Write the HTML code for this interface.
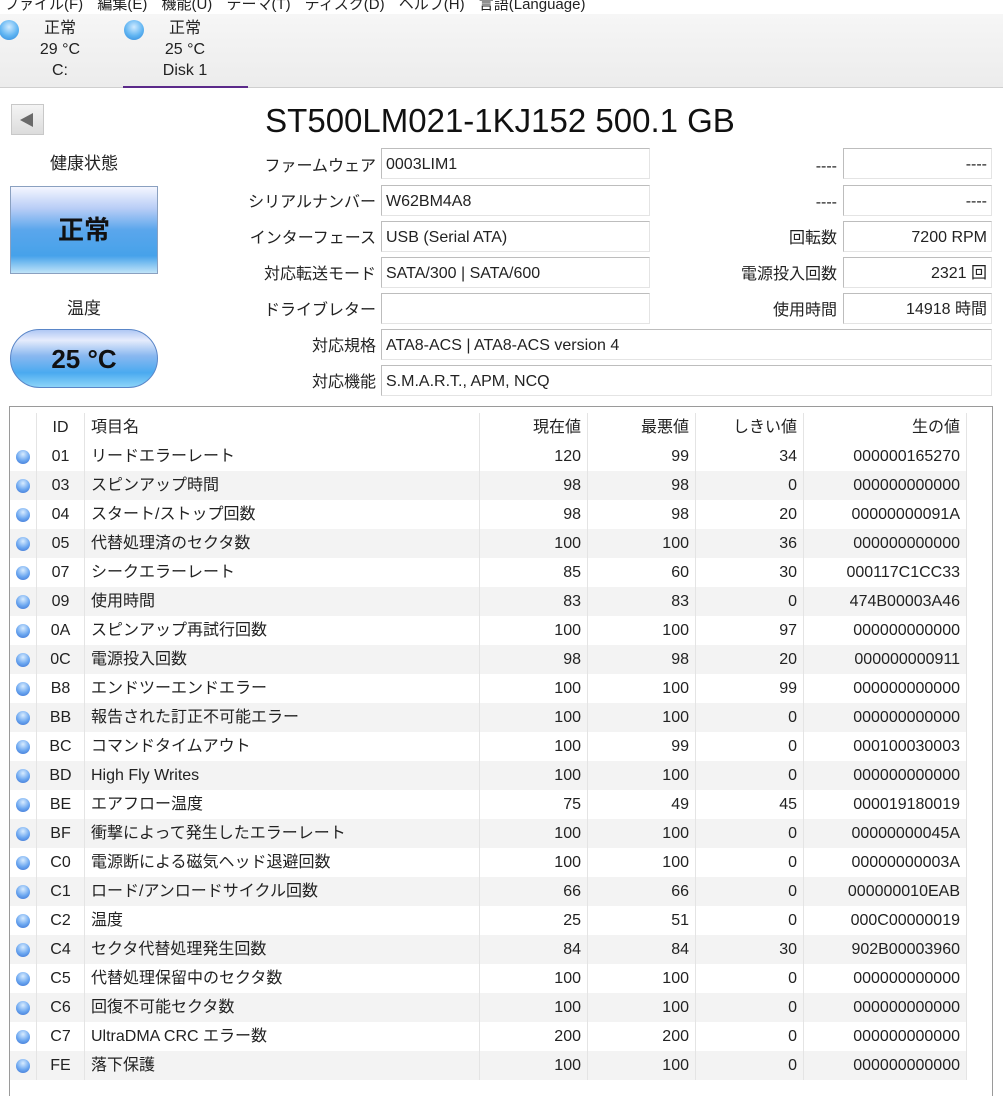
<!DOCTYPE html>
<html><head><meta charset="utf-8"><style>
*{margin:0;padding:0;box-sizing:border-box}
body{width:1003px;height:1087px;background:#fff;font-family:"Liberation Sans","Noto Sans CJK JP",sans-serif;color:#111;position:relative;overflow:hidden;font-size:16px}
.a{position:absolute;white-space:nowrap}
.menu{top:-7px;left:4px;font-size:15px;color:#222;word-spacing:10px}
.tabs{left:0;top:14px;width:1003px;height:74px;background:linear-gradient(#f6f6f6,#ececec);border-bottom:1px solid #cfcfcf}
.dot{width:20px;height:20px;border-radius:50%;background:radial-gradient(circle at 50% 35%,#cfeaff,#5fb4f2 55%,#2f86d8);}
.tab{text-align:center;font-size:16px;line-height:21px;color:#222}
.lbl{text-align:right;font-size:16px;color:#222;height:24px;line-height:24px}
.box{border:1px solid #bdbdbd;border-right-color:#e4e4e4;border-bottom-color:#e4e4e4;height:31px;font-size:16px;line-height:31px;padding:0 4px;color:#222;background:#fff}
.r{text-align:right}
table{border-collapse:collapse;font-size:16px;color:#222}
td{height:29px;line-height:29px;padding:0 6px;border-right:1px solid #e4e4e4;white-space:nowrap;vertical-align:middle}
tr:nth-child(odd) td{background:#f3f3f3}
tr.h td{background:#fff}
.sd{display:inline-block;width:14px;height:14px;border-radius:50%;background:radial-gradient(circle at 50% 30%,#d8ecff,#6aa6f0 55%,#3a6fd0);vertical-align:middle}
</style></head><body>
<div class="a menu">ファイル(F) 編集(E) 機能(U) テーマ(T) ディスク(D) ヘルプ(H) 言語(Language)</div>
<div class="a tabs"></div>
<div class="a dot" style="left:-1px;top:20px"></div>
<div class="a tab" style="left:30px;top:18px;width:60px">正常<br>29 °C<br>C:</div>
<div class="a dot" style="left:124px;top:20px"></div>
<div class="a tab" style="left:150px;top:18px;width:70px">正常<br>25 °C<br>Disk 1</div>
<div class="a" style="left:123px;top:86px;width:125px;height:2px;background:#5b2a8a"></div>
<div class="a" style="left:11px;top:104px;width:33px;height:31px;border:1px solid #c8c8c8;background:linear-gradient(#f4f4f4,#dcdcdc)"><div style="position:absolute;left:8px;top:8px;width:0;height:0;border-top:7px solid transparent;border-bottom:7px solid transparent;border-right:13px solid #6a6a6a"></div></div>
<div class="a" style="left:200px;width:600px;top:101px;text-align:center;font-size:33px;line-height:40px;color:#111">ST500LM021-1KJ152 500.1 GB</div>

<div class="a" style="left:10px;width:148px;top:152px;text-align:center;font-size:17px;line-height:24px;color:#222">健康状態</div>
<div class="a" style="left:10px;top:186px;width:148px;height:88px;border:1px solid #8aa0c0;background:linear-gradient(#f4f6ff 0%,#b8cdf6 25%,#5aa6ec 50%,#46a2ea 80%,#c0e4f8 100%);text-align:center;line-height:86px;font-size:26px;font-weight:bold;color:#111">正常</div>
<div class="a" style="left:10px;width:148px;top:297px;text-align:center;font-size:17px;line-height:24px;color:#222">温度</div>
<div class="a" style="left:10px;top:329px;width:148px;height:59px;border-radius:30px;border:1px solid #5a86c8;background:linear-gradient(#b0c8f4 0%,#e6ecfc 18%,#8ab8f0 45%,#4aaaf0 75%,#8cd4f8 100%);text-align:center;line-height:58px;font-size:26px;font-weight:bold;color:#111">25 °C</div>

<div class="a lbl" style="right:627px;top:155px">ファームウェア</div>
<div class="a box" style="left:381px;top:148px;width:269px">0003LIM1</div>
<div class="a lbl" style="right:627px;top:191px">シリアルナンバー</div>
<div class="a box" style="left:381px;top:185px;width:269px">W62BM4A8</div>
<div class="a lbl" style="right:627px;top:227px">インターフェース</div>
<div class="a box" style="left:381px;top:221px;width:269px">USB (Serial ATA)</div>
<div class="a lbl" style="right:627px;top:263px">対応転送モード</div>
<div class="a box" style="left:381px;top:257px;width:269px">SATA/300 | SATA/600</div>
<div class="a lbl" style="right:627px;top:299px">ドライブレター</div>
<div class="a box" style="left:381px;top:293px;width:269px"></div>
<div class="a lbl" style="right:627px;top:335px">対応規格</div>
<div class="a box" style="left:381px;top:329px;width:611px">ATA8-ACS | ATA8-ACS version 4</div>
<div class="a lbl" style="right:627px;top:371px">対応機能</div>
<div class="a box" style="left:381px;top:365px;width:611px">S.M.A.R.T., APM, NCQ</div>

<div class="a lbl" style="right:166px;top:155px">----</div>
<div class="a box r" style="left:843px;top:148px;width:149px">----</div>
<div class="a lbl" style="right:166px;top:191px">----</div>
<div class="a box r" style="left:843px;top:185px;width:149px">----</div>
<div class="a lbl" style="right:166px;top:227px">回転数</div>
<div class="a box r" style="left:843px;top:221px;width:149px">7200 RPM</div>
<div class="a lbl" style="right:166px;top:263px">電源投入回数</div>
<div class="a box r" style="left:843px;top:257px;width:149px">2321 回</div>
<div class="a lbl" style="right:166px;top:299px">使用時間</div>
<div class="a box r" style="left:843px;top:293px;width:149px">14918 時間</div>

<div class="a" style="left:9px;top:406px;width:984px;height:690px;border:1px solid #9a9a9a;border-bottom:none">
<table style="position:absolute;left:0;top:6px">
<colgroup><col style="width:26px"><col style="width:48px"><col style="width:395px"><col style="width:108px"><col style="width:108px"><col style="width:108px"><col style="width:163px"></colgroup>
<tr class="h"><td></td><td style="text-align:center">ID</td><td>項目名</td><td class="r">現在値</td><td class="r">最悪値</td><td class="r">しきい値</td><td class="r">生の値</td></tr>
<tr><td><span class="sd"></span></td><td style="text-align:center">01</td><td>リードエラーレート</td><td class="r">120</td><td class="r">99</td><td class="r">34</td><td class="r">000000165270</td></tr>
<tr><td><span class="sd"></span></td><td style="text-align:center">03</td><td>スピンアップ時間</td><td class="r">98</td><td class="r">98</td><td class="r">0</td><td class="r">000000000000</td></tr>
<tr><td><span class="sd"></span></td><td style="text-align:center">04</td><td>スタート/ストップ回数</td><td class="r">98</td><td class="r">98</td><td class="r">20</td><td class="r">00000000091A</td></tr>
<tr><td><span class="sd"></span></td><td style="text-align:center">05</td><td>代替処理済のセクタ数</td><td class="r">100</td><td class="r">100</td><td class="r">36</td><td class="r">000000000000</td></tr>
<tr><td><span class="sd"></span></td><td style="text-align:center">07</td><td>シークエラーレート</td><td class="r">85</td><td class="r">60</td><td class="r">30</td><td class="r">000117C1CC33</td></tr>
<tr><td><span class="sd"></span></td><td style="text-align:center">09</td><td>使用時間</td><td class="r">83</td><td class="r">83</td><td class="r">0</td><td class="r">474B00003A46</td></tr>
<tr><td><span class="sd"></span></td><td style="text-align:center">0A</td><td>スピンアップ再試行回数</td><td class="r">100</td><td class="r">100</td><td class="r">97</td><td class="r">000000000000</td></tr>
<tr><td><span class="sd"></span></td><td style="text-align:center">0C</td><td>電源投入回数</td><td class="r">98</td><td class="r">98</td><td class="r">20</td><td class="r">000000000911</td></tr>
<tr><td><span class="sd"></span></td><td style="text-align:center">B8</td><td>エンドツーエンドエラー</td><td class="r">100</td><td class="r">100</td><td class="r">99</td><td class="r">000000000000</td></tr>
<tr><td><span class="sd"></span></td><td style="text-align:center">BB</td><td>報告された訂正不可能エラー</td><td class="r">100</td><td class="r">100</td><td class="r">0</td><td class="r">000000000000</td></tr>
<tr><td><span class="sd"></span></td><td style="text-align:center">BC</td><td>コマンドタイムアウト</td><td class="r">100</td><td class="r">99</td><td class="r">0</td><td class="r">000100030003</td></tr>
<tr><td><span class="sd"></span></td><td style="text-align:center">BD</td><td>High Fly Writes</td><td class="r">100</td><td class="r">100</td><td class="r">0</td><td class="r">000000000000</td></tr>
<tr><td><span class="sd"></span></td><td style="text-align:center">BE</td><td>エアフロー温度</td><td class="r">75</td><td class="r">49</td><td class="r">45</td><td class="r">000019180019</td></tr>
<tr><td><span class="sd"></span></td><td style="text-align:center">BF</td><td>衝撃によって発生したエラーレート</td><td class="r">100</td><td class="r">100</td><td class="r">0</td><td class="r">00000000045A</td></tr>
<tr><td><span class="sd"></span></td><td style="text-align:center">C0</td><td>電源断による磁気ヘッド退避回数</td><td class="r">100</td><td class="r">100</td><td class="r">0</td><td class="r">00000000003A</td></tr>
<tr><td><span class="sd"></span></td><td style="text-align:center">C1</td><td>ロード/アンロードサイクル回数</td><td class="r">66</td><td class="r">66</td><td class="r">0</td><td class="r">000000010EAB</td></tr>
<tr><td><span class="sd"></span></td><td style="text-align:center">C2</td><td>温度</td><td class="r">25</td><td class="r">51</td><td class="r">0</td><td class="r">000C00000019</td></tr>
<tr><td><span class="sd"></span></td><td style="text-align:center">C4</td><td>セクタ代替処理発生回数</td><td class="r">84</td><td class="r">84</td><td class="r">30</td><td class="r">902B00003960</td></tr>
<tr><td><span class="sd"></span></td><td style="text-align:center">C5</td><td>代替処理保留中のセクタ数</td><td class="r">100</td><td class="r">100</td><td class="r">0</td><td class="r">000000000000</td></tr>
<tr><td><span class="sd"></span></td><td style="text-align:center">C6</td><td>回復不可能セクタ数</td><td class="r">100</td><td class="r">100</td><td class="r">0</td><td class="r">000000000000</td></tr>
<tr><td><span class="sd"></span></td><td style="text-align:center">C7</td><td>UltraDMA CRC エラー数</td><td class="r">200</td><td class="r">200</td><td class="r">0</td><td class="r">000000000000</td></tr>
<tr><td><span class="sd"></span></td><td style="text-align:center">FE</td><td>落下保護</td><td class="r">100</td><td class="r">100</td><td class="r">0</td><td class="r">000000000000</td></tr>
</table>
</div>
</body></html>
